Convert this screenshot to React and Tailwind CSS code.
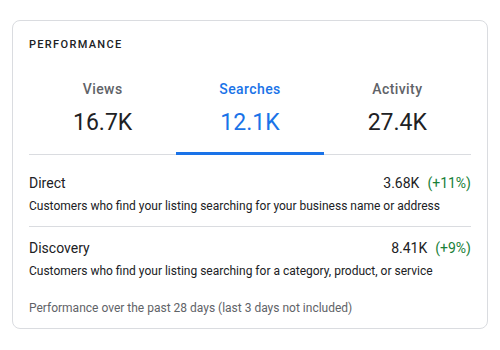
import React from 'react'

const tabs = [
  { label: 'Views', value: '16.7K' },
  { label: 'Searches', value: '12.1K', active: true },
  { label: 'Activity', value: '27.4K' },
]

const rows = [
  {
    title: 'Direct',
    value: '3.68K',
    change: '(+11%)',
    desc: 'Customers who find your listing searching for your business name or address',
  },
  {
    title: 'Discovery',
    value: '8.41K',
    change: '(+9%)',
    desc: 'Customers who find your listing searching for a category, product, or service',
  },
]

const App = () => {
  return (
    <div className="w-[500px] h-[350px] bg-white pt-[20px] pl-[12px]" style={{ fontFamily: 'Roboto, Arial, sans-serif' }}>
      <div className="w-[476px] h-[309px] border border-[#dadce0] rounded-lg px-[16px] pt-[16px]">
        <div className="text-[11px] leading-[16px] font-medium tracking-[0.12em] text-[#202124]">PERFORMANCE</div>

        {/* tabs */}
        <div className="mt-[26px] flex border-b border-[#dadce0]">
          {tabs.map((t) => (
            <div
              key={t.label}
              className={`flex-1 flex flex-col items-center ${t.active ? 'border-b-[3px] border-[#1a73e8] -mb-px pb-[13px] rounded-t-sm' : 'pb-[15px]'}`}
            >
              <div className={`text-[14px] leading-[20px] font-medium tracking-[0.03em] ${t.active ? 'text-[#1a73e8]' : 'text-[#5f6368]'}`}>
                {t.label}
              </div>
              <div className={`mt-[8px] text-[23px] leading-[32px] ${t.active ? 'text-[#1a73e8]' : 'text-[#202124]'}`}>
                {t.value}
              </div>
            </div>
          ))}
        </div>

        {/* breakdown */}
        {rows.map((r, i) => (
          <div key={r.title} className={`${i === 0 ? 'pt-[18px] border-b border-[#dadce0]' : 'pt-[11px]'} pb-[12px]`}>
            <div className="flex justify-between text-[14px] leading-[20px] text-[#202124]">
              <span>{r.title}</span>
              <span>
                {r.value}
                <span className="ml-[8px] text-[#188038]">{r.change}</span>
              </span>
            </div>
            <div className="mt-[5px] text-[12px] leading-[16px] text-[#202124]">{r.desc}</div>
          </div>
        ))}

        <div className="mt-[9px] text-[12px] leading-[16px] text-[#5f6368]">
          Performance over the past 28 days (last 3 days not included)
        </div>
      </div>
    </div>
  )
}

export default App
